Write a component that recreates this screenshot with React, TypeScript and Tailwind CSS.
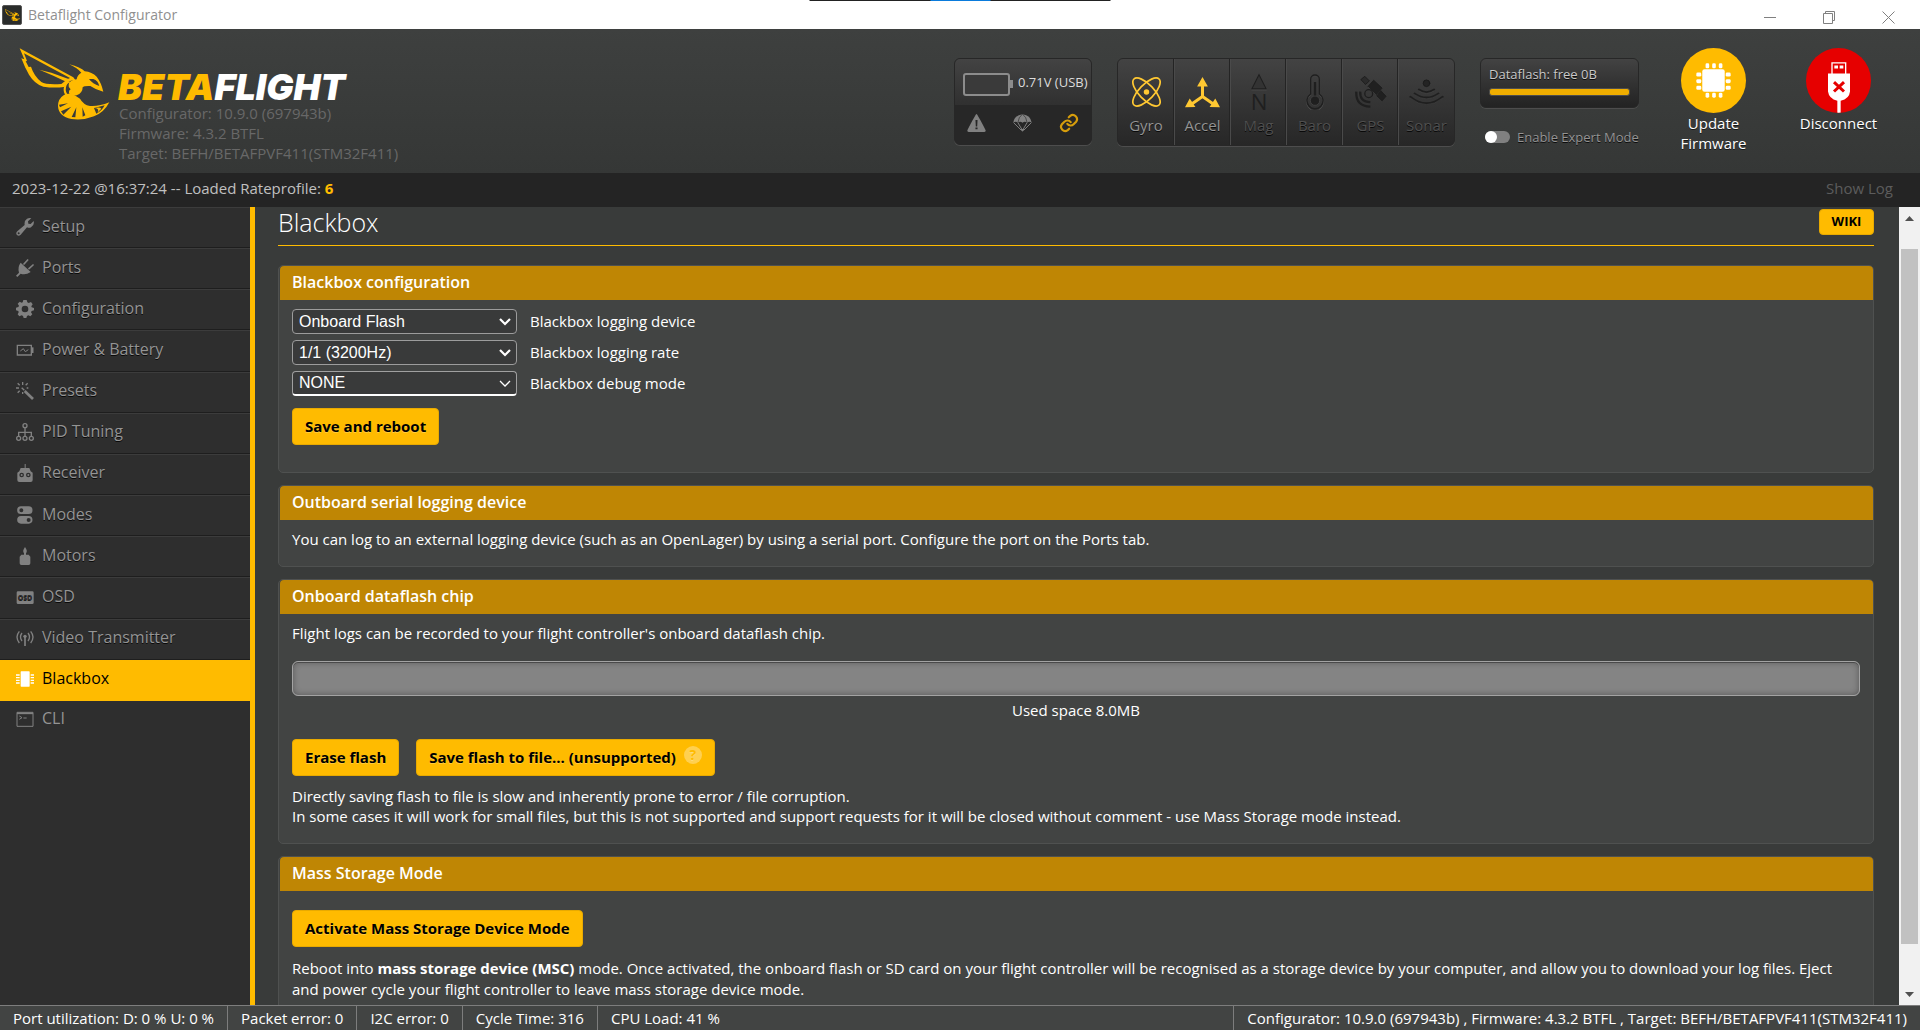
import React from 'react';

type IconProps = { className?: string };

const navClass = 'h-[18px] w-[18px] shrink-0';

function Bee({ className }: IconProps) {
  return (
    <svg viewBox="0 0 300 240" className={className} fill="#ffbb00" aria-hidden="true">
      <path
        fillRule="evenodd"
        d="M17 13 L178 100 L184 108 L166 111 L150 129 Q120 133 88 128 Q62 120 45 92 Q32 70 22 43 L31 46 Z M30 28 L39 51 L35 52 L44 69 L51 68 Q60 96 82 114 Q96 123 142 120 L160 106 L168 102 Z"
      />
      <path d="M76 77 L112 86 L172 108 L158 114 L118 95 Z" />
      <path
        fillRule="evenodd"
        d="M166 61 Q200 70 212 82 Q234 84 248 98 Q262 116 268 143 Q246 138 229 126 Q210 125 206 130 Q206 147 188 154 L176 156 Q163 150 165 143 Q165 138 170 136 Q160 128 166 115 L177 108 L188 106 Q190 92 202 86 Q190 72 166 61 Z M225 105 Q236 120 256 126 Q252 109 238 105 Z"
      />
      <path d="M166 111 Q150 118 149 134 Q148 148 158 156 L163 154 Q153 144 156 130 Q158 118 168 115 Z" />
      <path
        fillRule="evenodd"
        d="M172 150 Q186 155 198 164 Q208 182 228 186 Q254 188 286 175 Q270 206 240 217 Q208 230 172 225 Q134 218 132 186 Q132 164 150 153 Q160 147 172 150 Z M135 182 L162 178 L138 190 Z M141 202 L172 188 L148 212 Z M173 219 L187 190 L184 220 Z M206 218 L205 190 L214 214 Z M247 209 L240 192 L252 189 L272 184 Q264 200 247 209 Z"
      />
      <path d="M242 192 Q258 194 250 206 L262 194 Q258 188 242 192 Z" />
    </svg>
  );
}

function Warning() {
  return (
    <svg viewBox="0 0 54 52" className="h-[18px] w-[19px]" aria-hidden="true">
      <path fill="#818181" fillRule="evenodd" d="M27 0 Q30 1 53 46 Q55 51 50 52 H4 Q-1 51 1 46 Q24 1 27 0 Z M24 17 L25 36 H29 L30 17 Z M24 39 V44 H30 V39 Z" />
    </svg>
  );
}

function Parachute() {
  return (
    <svg viewBox="0 0 58 54" className="h-[18px] w-[19px]" aria-hidden="true">
      <path fill="#818181" d="M1 26 Q4 3 29 0 Q54 3 57 26 Q50 20 43 26 Q36 20 29 26 Q22 20 15 26 Q8 20 1 26 Z" />
      <path stroke="#2b2b2b" strokeWidth="2" fill="none" d="M15 26 Q17 8 28 1 M43 26 Q41 8 30 1" />
      <path stroke="#818181" strokeWidth="3" fill="none" d="M2 26 L26 50 M15 26 L28 48 M43 26 L30 48 M56 26 L32 50" />
      <path fill="#818181" d="M23 45 H35 L29 54 Z" />
    </svg>
  );
}

function Chain() {
  return (
    <svg viewBox="0 0 24 24" className="h-5 w-5" fill="none" stroke="#d69d0c" strokeWidth="2.6" strokeLinecap="round" aria-hidden="true">
      <path d="M10 13a5 5 0 0 0 7.5.5l3-3a5 5 0 0 0-7-7l-1.800 1.700" />
      <path d="M14 11a5 5 0 0 0-7.500-.5l-3 3a5 5 0 0 0 7 7l1.700-1.700" />
    </svg>
  );
}

function GyroIcon() {
  return (
    <svg viewBox="0 0 84 88" className="h-[30px] w-[29px]" fill="none" stroke="#ffc832" strokeWidth="5" aria-hidden="true">
      <ellipse cx="42" cy="44" rx="22" ry="53" transform="rotate(-44 42 44)" />
      <ellipse cx="42" cy="44" rx="22" ry="53" transform="rotate(44 42 44)" />
      <circle cx="42" cy="44" r="8" fill="#ffc832" stroke="none" />
    </svg>
  );
}

function AccelIcon() {
  return (
    <svg viewBox="0 0 104 92" className="h-[31px] w-[35px]" aria-hidden="true">
      <path stroke="#ffc832" strokeWidth="9" fill="none" d="M52 22 V58 L20 80 M52 58 L84 80" />
      <path fill="#ffc832" d="M52 0 L68 28 H36 Z M0 90 L14 64 L31 89 Z M104 90 L90 64 L73 89 Z" />
    </svg>
  );
}

function MagIcon() {
  return (
    <svg viewBox="0 0 46 110" className="h-[37px] w-[16px] overflow-visible" aria-hidden="true">
      <path d="M2 44 L23 2 L44 44 Z" fill="#333333" stroke="#1f1f1f" strokeWidth="3" />
      <path d="M1 48 H46" stroke="#4b4b4b" strokeWidth="2" />
      <text x="23" y="108" textAnchor="middle" fontFamily="Open Sans" fontSize="66" fill="#1f1f1f">N</text>
    </svg>
  );
}

function BaroIcon() {
  return (
    <svg viewBox="0 0 54 108" className="h-[36px] w-[18px]" fill="none" aria-hidden="true">
      <path d="M14 62 V16 A13 13 0 0 1 40 16 V62 A25 25 0 1 1 14 62 Z" stroke="#4b4b4b" strokeWidth="3" transform="translate(0 2)" />
      <path d="M14 60 V16 A13 13 0 0 1 40 16 V60 A24 24 0 1 1 14 60 Z" stroke="#1f1f1f" strokeWidth="4" />
      <path d="M27 24 V70" stroke="#1f1f1f" strokeWidth="7" />
      <circle cx="27" cy="80" r="14" fill="#1f1f1f" stroke="#484848" strokeWidth="2" />
    </svg>
  );
}

function GpsIcon() {
  return (
    <svg viewBox="0 0 96 98" className="h-[32px] w-[32px]" fill="none" stroke="#1f1f1f" strokeWidth="3" aria-hidden="true">
      <path d="M17 11 L29 1 L43 15 L31 26 Z" fill="#2b2b2b" />
      <path d="M78 45 L94 62 L82 76 L66 61 Z" fill="#202020" />
      <path d="M56 13 L82 37 L63 58 L38 33 Z" fill="#202020" />
      <path d="M38 33 L63 58" stroke="#4b4b4b" strokeWidth="2" />
      <circle cx="41" cy="54" r="12" stroke="#1d1d1d" strokeWidth="4" />
      <path d="M15 48 Q13 79 46 80" strokeWidth="7" />
      <path d="M3 48 Q1 93 46 94" strokeWidth="7" />
    </svg>
  );
}

function SonarIcon() {
  return (
    <svg viewBox="0 0 106 80" className="h-[27px] w-[35px]" fill="none" stroke="#1f1f1f" strokeWidth="6" strokeLinecap="round" aria-hidden="true">
      <circle cx="53" cy="12" r="10" fill="#242424" stroke="#1c1c1c" strokeWidth="3" />
      <path d="M30 31 Q53 47 76 31 M17 43 Q53 68 89 43 M4 53 Q53 93 102 53" />
      <path d="M30 35 Q53 51 76 35 M17 47 Q53 72 89 47 M4 57 Q53 97 102 57" stroke="#484848" strokeWidth="1.500" />
    </svg>
  );
}

function Chip() {
  const offsets = [10, 30, 50];
  return (
    <svg viewBox="0 0 104 106" className="h-[35px] w-[35px]" fill="#fff" aria-hidden="true">
      <rect x="18" y="19" width="68" height="68" rx="7" />
      {offsets.map((o) => (
        <g key={o}>
          <rect x={o + 18} y="1" width="11" height="15" rx="4" />
          <rect x={o + 18} y="90" width="11" height="15" rx="4" />
          <rect x="0" y={o + 19} width="15" height="12" rx="4" />
          <rect x="89" y={o + 19} width="15" height="12" rx="4" />
        </g>
      ))}
    </svg>
  );
}

function Usb() {
  return (
    <svg viewBox="0 0 66 152" className="h-[51px] w-[22px]" aria-hidden="true">
      <path fill="#fff" fillRule="evenodd" d="M10 0 H55 V34 H66 V88 Q64 110 38 116 V152 H28 V116 Q3 110 0 88 V34 H10 Z M14 4 V34 H51 V4 Z" />
      <path d="M19 10 H30 V19 H19 Z M35 10 H46 V19 H35 Z" fill="#fff" />
      <path d="M18 60 L48 88 M48 60 L18 88" stroke="#e60000" strokeWidth="9" />
    </svg>
  );
}

const nav: { label: string; icon: React.ReactNode }[] = [
  {
    label: 'Setup',
    icon: (
      <svg viewBox="0 0 54 54" className={navClass}>
        <path fill="currentColor" fillRule="evenodd" d="M46 1 L36 10 L37 17 L44 18 L53 9 Q56 22 45 28 Q40 31 33 28 L14 50 Q8 56 3 51 Q-2 46 4 40 L26 21 Q24 8 33 2 Q40 -1 46 1 Z M8 43 A3 3 0 1 0 8 49 A3 3 0 1 0 8 43 Z" />
      </svg>
    ),
  },
  {
    label: 'Ports',
    icon: (
      <svg viewBox="0 0 54 54" className={navClass}>
        <path fill="currentColor" d="M14 11 L44 39 Q28 50 14 44 L4 54 L0 50 L9 41 Q4 24 14 11 Z" />
        <path stroke="currentColor" strokeWidth="5" strokeLinecap="round" d="M24 15 L35 3 M39 29 L51 18" />
      </svg>
    ),
  },
  {
    label: 'Configuration',
    icon: (
      <svg viewBox="0 0 54 54" className={navClass}>
        <path fill="currentColor" fillRule="evenodd" d="M22 0 H32 L34 7 L38 9 L45 6 L50 13 L46 19 L47 22 L54 24 V31 L47 33 L45 37 L49 43 L43 49 L37 46 L33 48 L31 54 H23 L21 48 L17 46 L10 49 L5 43 L8 37 L7 33 L0 31 V23 L7 21 L9 17 L5 11 L11 5 L17 8 L20 7 Z M27 17 A10 10 0 1 0 27 37 A10 10 0 1 0 27 17 Z" />
      </svg>
    ),
  },
  {
    label: 'Power & Battery',
    icon: (
      <svg viewBox="0 0 54 54" className={navClass} fill="none" stroke="currentColor">
        <path strokeWidth="4" d="M4 13 H46 V42 H4 Z" />
        <path strokeWidth="5" d="M50 19 V36" />
        <path strokeWidth="3" d="M13 30 L22 23 L28 32 L37 26" />
      </svg>
    ),
  },
  {
    label: 'Presets',
    icon: (
      <svg viewBox="0 0 54 54" className={navClass} stroke="currentColor" fill="none">
        <path strokeWidth="8" d="M26 27 L51 51" />
        <path strokeWidth="4" d="M17 17 L25 25 M20 0 V9 M20 30 V36 M0 18 H9 M32 18 H37 M5 4 L11 10 M35 4 L29 10 M5 32 L11 26" />
      </svg>
    ),
  },
  {
    label: 'PID Tuning',
    icon: (
      <svg viewBox="0 0 54 54" className={navClass} stroke="currentColor" fill="none" strokeWidth="4">
        <circle cx="27" cy="8" r="6" />
        <circle cx="8" cy="46" r="6" />
        <circle cx="27" cy="46" r="6" />
        <circle cx="46" cy="46" r="6" />
        <path d="M27 14 V40 M8 40 V28 H46 V40" />
      </svg>
    ),
  },
  {
    label: 'Receiver',
    icon: (
      <svg viewBox="0 0 54 54" className={navClass}>
        <path fill="currentColor" fillRule="evenodd" d="M26 0 H29 V12 H40 L44 22 L50 26 V48 Q50 54 44 54 H10 Q4 54 4 48 V26 L10 22 L14 12 H26 Z M17 26 A7 7 0 1 0 17 40 A7 7 0 1 0 17 26 Z M37 26 A7 7 0 1 0 37 40 A7 7 0 1 0 37 26 Z" />
        <circle cx="17" cy="33" r="3" fill="currentColor" />
        <circle cx="37" cy="33" r="3" fill="currentColor" />
      </svg>
    ),
  },
  {
    label: 'Modes',
    icon: (
      <svg viewBox="0 0 54 54" className={navClass}>
        <path fill="currentColor" fillRule="evenodd" d="M15 1 H38 A11 11 0 0 1 38 24 H15 A11 11 0 0 1 15 1 Z M16 7 A6 6 0 1 0 16 19 A6 6 0 1 0 16 7 Z M15 30 H38 A11 11 0 0 1 38 53 H15 A11 11 0 0 1 15 30 Z M38 36 A6 6 0 1 0 38 48 A6 6 0 1 0 38 36 Z" />
      </svg>
    ),
  },
  {
    label: 'Motors',
    icon: (
      <svg viewBox="0 0 54 54" className={navClass}>
        <path fill="currentColor" d="M27 0 Q36 12 30 19 V23 H38 L43 29 V49 Q43 54 38 54 H16 Q11 54 11 49 V29 L16 23 H24 V19 Q18 12 27 0 Z" />
      </svg>
    ),
  },
  {
    label: 'OSD',
    icon: (
      <svg viewBox="0 0 54 54" className={navClass}>
        <rect x="2" y="10" width="51" height="38" rx="4" fill="currentColor" />
        <text x="27" y="37" textAnchor="middle" fontSize="21" fontWeight="bold" fontFamily="Open Sans" fill="#2e2e2e">OSD</text>
      </svg>
    ),
  },
  {
    label: 'Video Transmitter',
    icon: (
      <svg viewBox="0 0 54 54" className={navClass} fill="none" stroke="currentColor" strokeWidth="4">
        <path d="M10 7 Q-4 24 10 42 M18 12 Q9 24 18 36 M44 7 Q58 24 44 42 M36 12 Q45 24 36 36" />
        <path d="M27 24 V51" strokeWidth="5" />
        <circle cx="27" cy="22" r="5" fill="currentColor" stroke="none" />
      </svg>
    ),
  },
  {
    label: 'Blackbox',
    icon: (
      <svg viewBox="0 0 54 54" className={navClass} fill="#fff">
        <rect x="14" y="4" width="27" height="46" rx="2" />
        <path d="M0 13 H11 V17 H0 Z M0 21 H11 V25 H0 Z M0 29 H11 V33 H0 Z M0 37 H11 V41 H0 Z M44 13 H55 V17 H44 Z M44 21 H55 V25 H44 Z M44 29 H55 V33 H44 Z M44 37 H55 V41 H44 Z" />
      </svg>
    ),
  },
  {
    label: 'CLI',
    icon: (
      <svg viewBox="0 0 54 54" className={navClass} fill="none" stroke="currentColor">
        <path strokeWidth="3" d="M3 7 H51 V49 H3 Z" />
        <path strokeWidth="5" d="M3 10 H51" />
        <path strokeWidth="3" d="M10 18 L18 23 L10 28 M22 24 H32" />
      </svg>
    ),
  },
];

const sensors = [
  { label: 'Gyro', icon: <GyroIcon />, on: true },
  { label: 'Accel', icon: <AccelIcon />, on: true },
  { label: 'Mag', icon: <MagIcon />, on: false },
  { label: 'Baro', icon: <BaroIcon />, on: false },
  { label: 'GPS', icon: <GpsIcon />, on: false },
  { label: 'Sonar', icon: <SonarIcon />, on: false },
];

function Panel({ title, children, className = '' }: { title: string; children: React.ReactNode; className?: string }) {
  return (
    <section className="shrink-0 rounded-[5px] border border-[#4f5150] bg-[#424443]">
      <h2 className="ml-px flex h-[34px] items-center rounded-t-[4px] bg-[#bf8604] px-3 pb-0.5 text-base font-semibold text-white">{title}</h2>
      <div className={`px-[13px] ${className}`}>{children}</div>
    </section>
  );
}

function Button({ children }: { children: React.ReactNode }) {
  return (
    <button
      type="button"
      className="flex h-[37px] items-center rounded-[4px] border border-[#e8aa00] bg-[#ffbb00] px-3 pb-0.5 text-[15px] font-bold text-black [text-shadow:0_1px_rgba(255,255,255,0.25)]"
    >
      {children}
    </button>
  );
}

function SelectRow({ id, label, value, last = false }: { id: string; label: string; value: string; last?: boolean }) {
  return (
    <div className="flex items-center gap-[13px]">
      <div className="relative w-[225px]">
        <select
          id={id}
          className={`block h-[25px] w-full appearance-none rounded-[4px] border bg-[#393a3a] px-1.5 font-['Liberation_Sans'] text-base leading-5 text-white ${
            last ? 'border-[#a0a0a0] border-b-2 border-b-white' : 'border-[#9c9c9c]'
          }`}
        >
          <option>{value}</option>
        </select>
        <svg viewBox="0 0 12 8" className="pointer-events-none absolute top-[9px] right-[6px] h-2 w-3" fill="none" stroke="#fff" strokeWidth={last ? 1.3 : 2.2}>
          <path d="M1 1 L6 6 L11 1" />
        </svg>
      </div>
      <label htmlFor={id} className="pb-0.5">{label}</label>
    </div>
  );
}

export default function App() {
  return (
    <div className="flex h-screen flex-col overflow-hidden bg-[#393b3a] font-['Open_Sans',sans-serif] text-[15px] leading-5 text-white">
      <div className="relative flex h-[29px] shrink-0 items-center justify-between bg-white pl-[2px]">
        <div className="absolute top-0 left-1/2 flex h-px w-[301px] -translate-x-1/2 justify-center bg-[#222]">
          <div className="w-[60px] bg-[#0a7bdc]" />
        </div>
        <div className="flex items-center gap-1.5">
          <div className="flex h-5 w-5 items-center justify-center rounded-[2px] border border-[#555] bg-[#2a2c2b]">
            <Bee className="h-[14px] w-[17px]" />
          </div>
          <span className="text-[14px] text-[#909090]">Betaflight Configurator</span>
        </div>
        <div className="flex items-center gap-[46px] pt-1.5 pr-[25px] text-[#808080]">
          <button type="button" aria-label="Minimize" className="block">
            <svg viewBox="0 0 13 13" className="h-[13px] w-[13px]" fill="none" stroke="currentColor"><path d="M0 6.500 H12" /></svg>
          </button>
          <button type="button" aria-label="Restore" className="block">
            <svg viewBox="0 0 13 13" className="h-[13px] w-[13px]" fill="none" stroke="currentColor"><path d="M.5 2.500 H9.500 V12.500 H.5 Z M2.500 2.500 V.5 H11.500 V9.500 H9.500" /></svg>
          </button>
          <button type="button" aria-label="Close" className="block">
            <svg viewBox="0 0 13 13" className="h-[13px] w-[13px]" fill="none" stroke="currentColor"><path d="M.5 .5 L12.500 12.500 M12.500 .5 L.5 12.500" /></svg>
          </button>
        </div>
      </div>

      <header className="flex h-36 shrink-0 items-start justify-between bg-linear-to-b from-[#3e403f] to-[#353736] pr-[19px]">
        <div className="flex pt-[15px] pl-[14px]">
          <Bee className="h-20 w-[100px]" />
          <div className="pt-[29px] pl-1 text-[#686868]">
            <div className="mb-0.5 font-[Inter] text-[36px] leading-7 font-black whitespace-nowrap text-white italic">
              <span className="text-[#ffbb00]">BETA</span>FLIGHT
            </div>
            <div className="pl-px">
              <div>Configurator: 10.9.0 (697943b)</div>
              <div>Firmware: 4.3.2 BTFL</div>
              <div>Target: BEFH/BETAFPVF411(STM32F411)</div>
            </div>
          </div>
        </div>

        <div className="flex items-start">
          <div className="mt-[29px] h-[87px] w-[138px] overflow-hidden rounded-[6px] border border-[#272727] bg-[#272727] shadow-[0_1px_0_#4d4d4d]">
            <div className="flex h-[46px] items-center bg-linear-to-b from-[#434343] to-[#303030] pt-1 pl-2">
              <div className="h-[23px] w-[47px] rounded-[3px] border-2 border-[#8c8c8c] bg-[#3a3a3a]" />
              <div className="h-2 w-[3px] bg-[#8c8c8c]" />
              <span className="ml-[5px] pb-1 text-[13px] whitespace-nowrap text-[#dcdcdc]">0.71V (USB)</span>
            </div>
            <div className="flex h-[39px] items-center justify-between px-3 pb-1">
              <Warning />
              <Parachute />
              <Chain />
            </div>
          </div>

          <div className="mt-[29px] ml-[25px] flex h-[88px] overflow-hidden rounded-[6px] border border-[#272727] bg-linear-to-b from-[#434343] to-[#272727] shadow-[0_1px_0_#4d4d4d]">
            {sensors.map((s, i) => (
              <div
                key={s.label}
                className={`flex w-14 flex-col items-center ${i ? 'border-l border-l-[#4a4a4a] shadow-[-1px_0_0_#242424]' : ''}`}
              >
                <div className="flex h-[66px] items-center justify-center">{s.icon}</div>
                <span className={`-mt-2.5 text-[15px] [text-shadow:0_1px_rgba(0,0,0,0.8)] ${s.on ? 'text-[#949494]' : 'text-[#4f4f4f]'}`}>{s.label}</span>
              </div>
            ))}
          </div>

          <div className="mt-[29px] ml-[25px] flex w-[159px] flex-col">
            <div className="h-[50px] rounded-[6px] border border-[#272727] bg-linear-to-b from-[#434343] to-[#232323] px-2 pt-[5px] shadow-[0_1px_0_#4d4d4d]">
              <div className="text-[13px] text-[#c9c9c9] [text-shadow:0_1px_rgba(0,0,0,0.8)]">Dataflash: free 0B</div>
              <div className="mt-1 h-2 rounded-[3px] border border-[#4d4d4d] bg-[#f0ae00]" />
            </div>
            <label className="mt-[19px] flex items-center gap-[7px] pl-[5px] text-[13px] whitespace-nowrap text-[#949494] [text-shadow:0_1px_rgba(0,0,0,0.8)]">
              <input
                type="checkbox"
                className="h-3 w-[25px] shrink-0 appearance-none rounded-full bg-[#808080] before:block before:h-3 before:w-3 before:rounded-full before:bg-white"
              />
              Enable Expert Mode
            </label>
          </div>

          <button type="button" className="mt-[19px] ml-[12px] flex w-[125px] flex-col items-center [text-shadow:0_1px_rgba(0,0,0,0.6)]">
            <span className="flex h-[65px] w-[65px] items-center justify-center rounded-full bg-[#ffbb00]">
              <Chip />
            </span>
            <span>Update</span>
            <span>Firmware</span>
          </button>
          <button type="button" className="mt-[19px] flex w-[125px] flex-col items-center [text-shadow:0_1px_rgba(0,0,0,0.6)]">
            <span className="flex h-[65px] w-[65px] items-end justify-center overflow-hidden rounded-full bg-[#e60000]">
              <Usb />
            </span>
            <span>Disconnect</span>
          </button>
        </div>
      </header>

      <div className="flex h-[34px] shrink-0 items-center justify-between bg-[#242424] pr-[27px] pb-1 pl-3">
        <div className="text-[#c0c0c0]">
          2023-12-22 @16:37:24 -- Loaded Rateprofile: <b className="text-[#ffbb00]">6</b>
        </div>
        <button type="button" className="text-[#5c5c5c]">Show Log</button>
      </div>

      <div className="flex min-h-0 flex-1">
        <nav className="w-[255px] shrink-0 border-r-[5px] border-r-[#ffbb00] bg-[#2e2e2e]">
          <ul className="grid h-[535px] auto-rows-fr">
            {nav.map((n) => {
              const active = n.label === 'Blackbox';
              const last = n.label === 'CLI';
              return (
                <li key={n.label} className="flex">
                  <a
                    href="#"
                    className={`flex flex-1 items-center gap-2 pl-4 text-base ${
                      active
                        ? 'bg-[#ffbb00] pb-1 text-black'
                        : last
                          ? 'pb-1.5 text-[#949494]'
                          : 'border-t border-b border-t-[#3c3c3c] border-b-[#1e1e1e] pb-1 text-[#949494] [text-shadow:0_1px_rgba(0,0,0,0.8)]'
                    }`}
                  >
                    <span className={`pt-0.5 ${active ? '' : 'text-[#818181]'}`}>{n.icon}</span>
                    {n.label}
                  </a>
                </li>
              );
            })}
          </ul>
        </nav>

        <main className="flex min-w-0 flex-1 flex-col overflow-hidden pr-[25px] pl-[23px]">
          <div className="mb-[19px] flex h-[39px] shrink-0 items-start justify-between border-b border-b-[#ffbb00]">
            <h1 className="text-[25px] leading-[30px] font-light">Blackbox</h1>
            <a href="#" className="mt-0.5 flex h-[26px] w-[55px] items-center justify-center rounded-[4px] border border-[#e8aa00] bg-[#ffbb00] pb-0.5 text-[13px] font-bold text-black">
              WIKI
            </a>
          </div>

          <div className="flex flex-col gap-3">
            <Panel title="Blackbox configuration" className="pt-[9px] pb-[27px]">
              <div className="flex flex-col gap-1.5">
                <SelectRow id="device" label="Blackbox logging device" value="Onboard Flash" />
                <SelectRow id="rate" label="Blackbox logging rate" value="1/1 (3200Hz)" />
                <SelectRow id="debug" label="Blackbox debug mode" value="NONE" last />
              </div>
              <div className="mt-3 flex">
                <Button>Save and reboot</Button>
              </div>
            </Panel>

            <Panel title="Outboard serial logging device" className="pt-[9px] pb-[17px]">
              <p>You can log to an external logging device (such as an OpenLager) by using a serial port. Configure the port on the Ports tab.</p>
            </Panel>

            <Panel title="Onboard dataflash chip" className="pt-[9px] pb-[17px]">
              <p>Flight logs can be recorded to your flight controller's onboard dataflash chip.</p>
              <div
                role="progressbar"
                aria-label="Used space"
                className="mt-[18px] h-[35px] rounded-[6px] border border-[#a3a3a3] bg-[#848484] shadow-[inset_0_1px_0_#4a4a4a,inset_0_0_6px_rgba(0,0,0,0.35)]"
              />
              <div className="mt-1 text-center">Used space 8.0MB</div>
              <div className="mt-[19px] flex gap-[17px]">
                <Button>Erase flash</Button>
                <Button>
                  Save flash to file... (unsupported)
                  <span className="mb-1 ml-2 flex h-[18px] w-[18px] items-center justify-center rounded-full bg-[#ffd050] text-[14px] text-[#ffbb00]">?</span>
                </Button>
              </div>
              <p className="mt-2.5">Directly saving flash to file is slow and inherently prone to error / file corruption.</p>
              <p>In some cases it will work for small files, but this is not supported and support requests for it will be closed without comment - use Mass Storage mode instead.</p>
            </Panel>

            <Panel title="Mass Storage Mode" className="pt-[19px] pb-[17px]">
              <div className="flex">
                <Button>Activate Mass Storage Device Mode</Button>
              </div>
              <p className="mt-[11px] leading-[21px]">
                Reboot into <b>mass storage device (MSC)</b> mode. Once activated, the onboard flash or SD card on your flight controller will be recognised as a storage device by your computer, and allow you to download your log files. Eject and power cycle your flight controller to leave mass storage device mode.
              </p>
            </Panel>
          </div>
        </main>

        <div className="flex w-[21px] shrink-0 flex-col items-center bg-[#f1f1f1]" aria-hidden="true">
          <svg viewBox="0 0 21 21" className="h-[42px] w-[21px] shrink-0 pb-[19px]"><path d="M6 13 L10.500 8 L15 13 Z" fill="#505050" /></svg>
          <div className="w-[17px] flex-1 bg-[#c1c1c1]" />
          <svg viewBox="0 0 21 21" className="h-[61px] w-[21px] shrink-0 pt-10"><path d="M6 8 L10.500 13 L15 8 Z" fill="#505050" /></svg>
        </div>
      </div>

      <footer className="flex h-[25px] shrink-0 items-center justify-between border-t border-t-[#7d7d7d] bg-[#424443]">
        <div className="flex divide-x divide-[#7d7d7d]">
          {['Port utilization: D: 0 % U: 0 %', 'Packet error: 0', 'I2C error: 0', 'Cycle Time: 316', 'CPU Load: 41 %'].map((t) => (
            <span key={t} className="px-[13px] leading-6">{t}</span>
          ))}
        </div>
        <span className="border-l border-l-[#7d7d7d] px-[13px] leading-6">
          Configurator: 10.9.0 (697943b) , Firmware: 4.3.2 BTFL , Target: BEFH/BETAFPVF411(STM32F411)
        </span>
      </footer>
    </div>
  );
}
